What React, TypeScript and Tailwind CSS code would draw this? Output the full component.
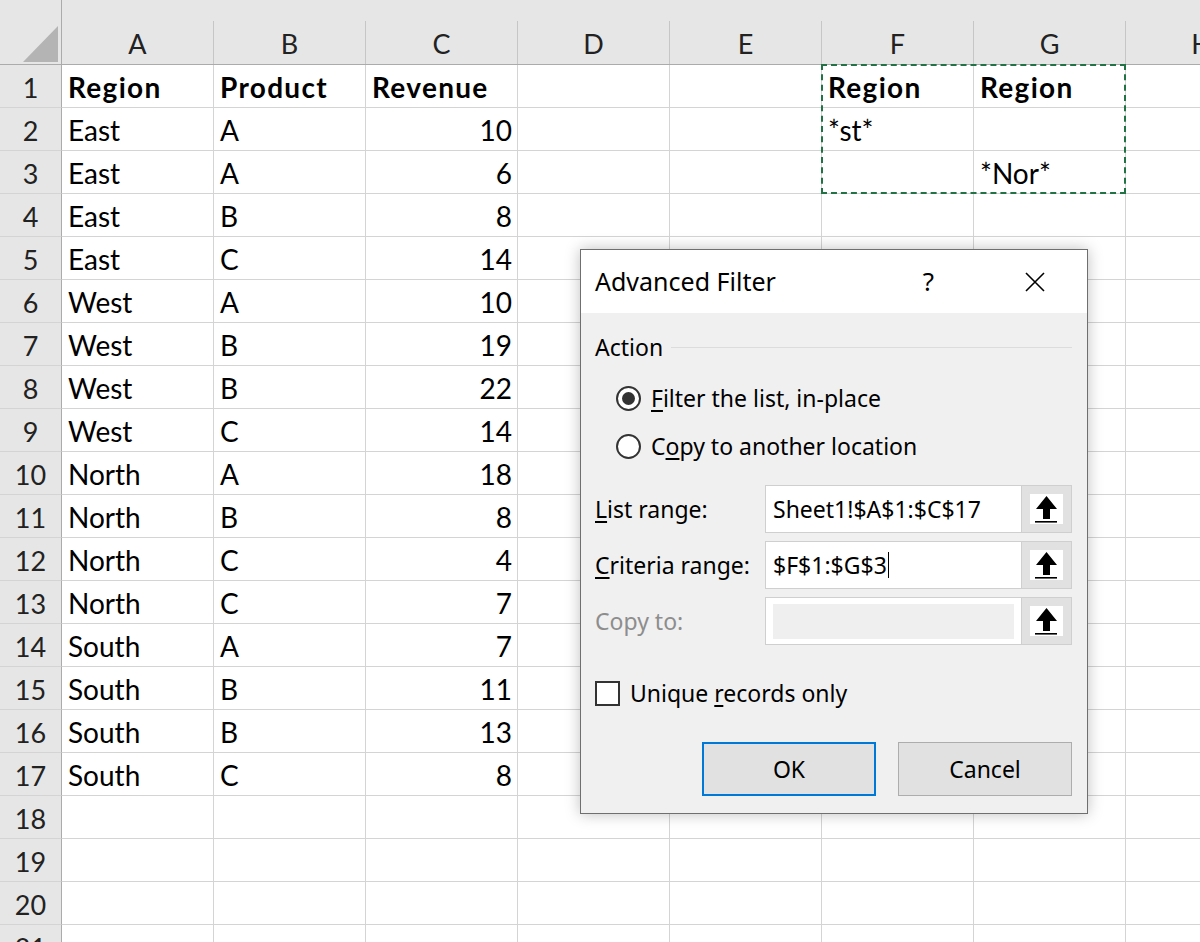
import React from "react";

type Cell = { text: string; bold?: boolean; right?: boolean };

const COLS = ["A", "B", "C", "D", "E", "F", "G", "H"];

const data: [string, string, string][] = [
  ["East", "A", "10"],
  ["East", "A", "6"],
  ["East", "B", "8"],
  ["East", "C", "14"],
  ["West", "A", "10"],
  ["West", "B", "19"],
  ["West", "B", "22"],
  ["West", "C", "14"],
  ["North", "A", "18"],
  ["North", "B", "8"],
  ["North", "C", "4"],
  ["North", "C", "7"],
  ["South", "A", "7"],
  ["South", "B", "11"],
  ["South", "B", "13"],
  ["South", "C", "8"],
];

function buildRows(): Cell[][] {
  const rows: Cell[][] = [];
  const blank = (): Cell[] => COLS.map(() => ({ text: "" }));
  const head = blank();
  head[0] = { text: "Region", bold: true };
  head[1] = { text: "Product", bold: true };
  head[2] = { text: "Revenue", bold: true };
  head[5] = { text: "Region", bold: true };
  head[6] = { text: "Region", bold: true };
  rows.push(head);
  data.forEach(([r, p, v], i) => {
    const row = blank();
    row[0] = { text: r };
    row[1] = { text: p };
    row[2] = { text: v, right: true };
    if (i === 0) row[5] = { text: "*st*" };
    if (i === 1) row[6] = { text: "*Nor*" };
    rows.push(row);
  });
  for (let i = 0; i < 4; i++) rows.push(blank());
  return rows;
}

function UpArrowButton() {
  return (
    <div className="flex h-full w-[50px] shrink-0 items-center justify-center border-l border-[#cfcfcf] bg-[#e1e1e1]">
      <div className="h-[30px] w-[33px] bg-white">
        <svg width="33" height="30" viewBox="0 0 33 30">
          <path d="M16.5 2 L27 15 L20 15 L20 25 L13 25 L13 15 L6 15 Z" fill="#000" />
          <rect x="5" y="27" width="22" height="1.6" fill="#000" />
        </svg>
      </div>
    </div>
  );
}

function RangeRow({
  mnemonic,
  rest,
  value,
  disabled,
  caret,
}: {
  mnemonic?: string;
  rest: string;
  value?: string;
  disabled?: boolean;
  caret?: boolean;
}) {
  return (
    <div className="flex h-[48px] items-center">
      <div className={`w-[170px] shrink-0 ${disabled ? "text-[#8d8d8d]" : "text-black"}`}>
        {mnemonic && <u className="underline-offset-[3px]">{mnemonic}</u>}
        {rest}
      </div>
      <div className="flex h-full flex-1 border border-[#cfcfcf] bg-white">
        <div className="flex flex-1 items-center px-[7px]">
          {disabled ? (
            <div className="h-[35px] w-full bg-[#efefef]" />
          ) : (
            <span className="flex items-center">
              {value}
              {caret && <span className="ml-[1px] inline-block h-[26px] w-[1px] bg-black" />}
            </span>
          )}
        </div>
        <UpArrowButton />
      </div>
    </div>
  );
}

function AdvancedFilterDialog() {
  return (
    <div className="absolute left-[580px] top-[249px] flex h-[565px] w-[508px] flex-col border border-[#6f6f6f] bg-[#f0f0f0] font-['Noto_Sans',sans-serif] text-[23px] text-black shadow-[0_0_14px_rgba(0,0,0,0.25)]">
      <div className="flex h-[63px] shrink-0 items-center bg-white pl-[14px]">
        <span className="flex-1 text-[25px]">Advanced Filter</span>
        <span className="mr-[91px] text-[26px]">?</span>
        <svg width="20" height="20" viewBox="0 0 20 20" className="mr-[42px]">
          <path d="M1 1 L19 19 M19 1 L1 19" stroke="#000" strokeWidth="1.6" />
        </svg>
      </div>
      <div className="flex flex-1 flex-col pl-[14px] pr-[15px]">
        <div className="mt-[20px] flex h-[28px] items-center">
          <span>Action</span>
          <div className="ml-[8px] h-[1px] flex-1 bg-[#dcdcdc]" />
        </div>
        <div className="mt-[17px] flex h-[40px] items-center pl-[21px]">
          <span className="flex h-[25px] w-[25px] items-center justify-center rounded-full border-2 border-[#333] bg-white">
            <span className="h-[13px] w-[13px] rounded-full bg-[#333]" />
          </span>
          <span className="ml-[10px]">
            <u className="underline-offset-[3px]">F</u>ilter the list, in-place
          </span>
        </div>
        <div className="mt-[8px] flex h-[40px] items-center pl-[21px]">
          <span className="h-[25px] w-[25px] rounded-full border-2 border-[#333] bg-white" />
          <span className="ml-[10px]">
            C<u className="underline-offset-[3px]">o</u>py to another location
          </span>
        </div>
        <div className="mt-[19px] flex flex-col gap-[8px]">
          <RangeRow mnemonic="L" rest="ist range:" value="Sheet1!$A$1:$C$17" />
          <RangeRow mnemonic="C" rest="riteria range:" value="$F$1:$G$3" caret />
          <RangeRow rest="Copy to:" disabled />
        </div>
        <div className="mt-[32px] flex h-[32px] items-center">
          <span className="h-[25px] w-[25px] border-2 border-[#333] bg-white" />
          <span className="ml-[10px]">
            Unique <u className="underline-offset-[3px]">r</u>ecords only
          </span>
        </div>
        <div className="mt-[33px] flex justify-end gap-[22px]">
          <button className="h-[54px] w-[174px] border-2 border-[#0078d7] bg-[#e1e1e1]">OK</button>
          <button className="h-[54px] w-[174px] border border-[#adadad] bg-[#e1e1e1]">Cancel</button>
        </div>
      </div>
    </div>
  );
}

export default function App() {
  const rows = buildRows();
  return (
    <div className="relative h-[942px] w-[1200px] overflow-hidden bg-white font-['Lato',sans-serif] text-black">
      {/* column header band */}
      <div className="flex h-[65px] border-b border-[#ababab] bg-[#e6e6e6]">
        <div className="relative h-full w-[62px] shrink-0 border-r border-[#ababab]">
          <svg width="36" height="36" viewBox="0 0 36 36" className="absolute left-[23px] top-[26px]">
            <polygon points="35,0 35,36 0,36" fill="#b4b4b4" />
          </svg>
        </div>
        {COLS.map((c) => (
          <div key={c} className="flex h-full w-[152px] shrink-0 flex-col">
            <div className="h-[21px]" />
            <div className="flex flex-1 items-end justify-center border-r border-[#c6c6c6] pb-[7px] text-[27px] leading-none text-[#222]">
              {c}
            </div>
          </div>
        ))}
      </div>

      {rows.map((row, ri) => (
        <div key={ri} className="flex h-[43px]">
          <div className="flex h-full w-[62px] shrink-0 items-end justify-center border-b border-r border-b-[#d4d4d4] border-r-[#ababab] bg-[#e6e6e6] pb-[6px] text-[27px] leading-none text-[#222]">
            {ri + 1}
          </div>
          {row.map((cell, ci) => (
            <div
              key={ci}
              className={`flex h-full w-[152px] shrink-0 items-end border-b border-r border-[#d4d4d4] pb-[6px] text-[28px] leading-none ${
                cell.right ? "justify-end pr-[5px]" : "pl-[6px]"
              } ${cell.bold ? "font-bold tracking-[1.3px]" : ""}`}
            >
              {cell.text}
            </div>
          ))}
        </div>
      ))}

      {/* criteria range marquee */}
      <div className="absolute left-[821px] top-[64px] h-[130px] w-[305px] border-2 border-dashed border-[#217346]" />

      <AdvancedFilterDialog />
    </div>
  );
}
